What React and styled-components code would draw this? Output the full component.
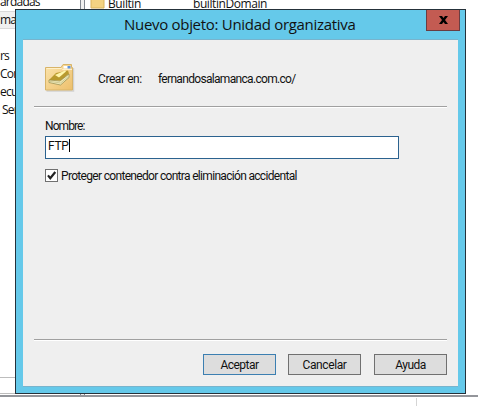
import React from 'react';
import styled, { createGlobalStyle } from 'styled-components';

const Global = createGlobalStyle`
  * { box-sizing: border-box; }
  html, body { margin: 0; background: #fff; overflow: hidden; }
  body { font-family: Roboto, "Noto Sans", sans-serif; font-size: 12px; color: #111; }
`;

const Console = styled.main`
  position: relative;
  width: 478px;
  height: 406px;
  display: flex;
  flex-direction: column;
  overflow: hidden;
  background: #fff;
`;
const Panes = styled.div`
  display: flex;
  height: 395px;
`;
const Tree = styled.div`
  width: 81px;
  border-right: 1px solid #828790;
  font: 12px/18px "Open Sans", sans-serif;
  letter-spacing: -0.8px;
  display: flex;
  flex-direction: column;
`;
const TreeItem = styled.div`
  height: 18px;
  flex: none;
  white-space: pre;
  padding-left: ${(p) => p.$indent || 0}px;
  margin-top: ${(p) => p.$gap || 0}px;
  background: ${(p) => (p.$selected ? '#f0f0f0' : 'transparent')};
  box-shadow: ${(p) => (p.$selected ? 'inset 0 1px #d9d9d9, inset 0 -1px #d9d9d9' : 'none')};
`;
const TreeScroll = styled.div`
  margin-top: auto;
  height: 17px;
  border-top: 1px solid #bdbdbd;
  border-bottom: 1px solid #bdbdbd;
  margin-bottom: 1px;
`;
const Splitter = styled.div`
  width: 3px;
  background: #f0f0f0;
`;
const List = styled.div`
  flex: 1;
  border-left: 1px solid #828790;
  padding-left: 5px;
  display: flex;
  align-items: flex-start;
  font: 12px/18px "Open Sans", sans-serif;
  letter-spacing: -0.42px;
`;
const ListIcon = styled.svg`
  margin-top: -7px;
  flex: none;
`;
const Cell = styled.span`
  width: ${(p) => p.$w}px;
  margin-top: -5px;
`;
const StatusBar = styled.div`
  height: 11px;
  display: flex;
  border-top: 2px solid #93959a;
`;
const StatusPart = styled.div`
  width: 417px;
  margin-top: 1px;
  border-right: 1px solid #d5d5d5;
`;

const Dialog = styled.section`
  position: absolute;
  left: 15px;
  top: 9px;
  width: 451px;
  height: 385px;
  border: 1px solid #25313a;
  background: #65c9ea;
  padding: 0 7px 6px;
  display: flex;
  flex-direction: column;
`;
const TitleBar = styled.header`
  height: 29px;
  flex: none;
  display: flex;
  justify-content: flex-end;
  margin-right: -2px;
`;
const Title = styled.h1`
  flex: 1;
  margin: 0 0 0 101px;
  font: 400 15px/29px "Open Sans", sans-serif;
  letter-spacing: ${(p) => p.$ls}px;
  white-space: nowrap;
`;
const Close = styled.button`
  width: 34px;
  height: 21px;
  padding: 0;
  border: 1px solid #693d42;
  border-top: 0;
  background: #c35b52;
  display: flex;
  align-items: center;
  justify-content: center;
`;
const Client = styled.div`
  flex: 1;
  background: #efefef;
  border-top: 1px solid #78b4cd;
  border-bottom: 1px solid #78b4cd;
  padding: 0 11px;
  display: flex;
  flex-direction: column;
`;
const Origin = styled.div`
  height: 66px;
  padding-left: 11px;
  display: flex;
  align-items: flex-start;
`;
const FolderIcon = styled.svg`
  flex: none;
  margin: 24px 23px 0 0;
`;
const Text = styled.span`
  font-size: 12px;
  line-height: 16px;
  letter-spacing: ${(p) => p.$ls || 0}px;
  white-space: nowrap;
`;
const OriginText = styled(Text)`
  width: ${(p) => p.$w}px;
  margin-top: 31px;
`;
const Rule = styled.div`
  height: 2px;
  flex: none;
  background: linear-gradient(#a0a0a0 50%, #fff 50%);
`;
const Form = styled.div`
  flex: 1;
  padding: 10px 0 0 11px;
  display: flex;
  flex-direction: column;
  align-items: flex-start;
`;
const Field = styled.div`
  width: 354px;
  height: 23px;
  margin: 2px 0 10px;
  padding: 1px 0 0 2px;
  border: 1px solid #2b628f;
  background: #fff;
  display: flex;
  align-items: flex-start;
`;
const Caret = styled.i`
  width: 1px;
  height: 13px;
  margin-top: 1px;
  background: #000;
`;
const CheckRow = styled.label`
  display: flex;
  align-items: center;
  gap: 3px;
  height: 13px;
`;
const Box = styled.svg`
  flex: none;
  border: 1px solid #707070;
  background: #fff;
`;
const Footer = styled.footer`
  height: 45px;
  padding-top: 13px;
  display: flex;
  justify-content: flex-end;
  gap: 12px;
`;
const Button = styled.button`
  width: 73px;
  height: 21px;
  padding: 1px 0 0;
  margin: 0 0 0 ${(p) => p.$ml || 0}px;
  border: 1px solid ${(p) => (p.$primary ? '#3c7fb1' : '#707070')};
  background: #ddd;
  color: #111;
  font: 12px/18px Roboto, sans-serif;
  letter-spacing: ${(p) => p.$ls || 0}px;
`;

export default function App() {
  return (
    <Console>
      <Global />
      <Panes>
        <Tree>
          <TreeItem $gap={-7}>ardadas</TreeItem>
          <TreeItem $selected>ma</TreeItem>
          <TreeItem $gap={18}>rs</TreeItem>
          <TreeItem>Com</TreeItem>
          <TreeItem>ecurity</TreeItem>
          <TreeItem $indent={2}>Service</TreeItem>
          <TreeScroll />
        </Tree>
        <Splitter />
        <List>
          <ListIcon width="18" height="16" viewBox="0 0 18 16">
            <path d="M1 2h13v13H1z" fill="#f3d382" stroke="#d9b45c" />
          </ListIcon>
          <Cell $w={85}>Builtin</Cell>
          <Cell $w={100}>builtinDomain</Cell>
        </List>
      </Panes>
      <StatusBar><StatusPart /></StatusBar>

      <Dialog>
        <TitleBar>
          <Title $ls={-0.3}>Nuevo objeto: Unidad organizativa</Title>
          <Close aria-label="Cerrar">
            <svg width="9" height="8" viewBox="0 0 9 8">
              <path d="M0 0h3l1.500 2L6 0h3L6 4l3 4H6L4.500 6 3 8H0l3-4z" fill="#000" />
            </svg>
          </Close>
        </TitleBar>
        <Client>
          <Origin>
            <FolderIcon width="30" height="28" viewBox="0 0 30 28">
              <defs>
                <linearGradient id="folder" x1="0" y1="0" x2="1" y2="1">
                  <stop offset="0" stopColor="#fbe4ac" />
                  <stop offset="1" stopColor="#edbf6b" />
                </linearGradient>
              </defs>
              <path d="M1.500 27h27V4" fill="none" stroke="#d2d2d2" strokeWidth="1.500" />
              <path d="M.5 3.500H16L18 .5h8.500v3h1v22.500H.5z" fill="url(#folder)" stroke="#d8b469" />
              <path d="M18.500 2h7v2.500h-7z" fill="#fff" />
              <path d="M22.500 2h3v2.500h-3z" fill="#5c92dd" />
              <path d="M1.500 4.500h15l1 1h9.500" fill="none" stroke="#fff0c8" />
              <path d="M4 16l7-7 12-2.500 1 3-8 7z" fill="#b99a2e" />
              <path d="M10 11l10-4.500 1 1-7 6z" fill="#fff6ac" />
              <path d="M4 16l11 1 9-7v3.500L15.500 21 4 18.500z" fill="#f1ebbb" stroke="#928a4a" strokeWidth=".7" />
              <path d="M4.500 17.300l11 1.700 8-6.500" fill="none" stroke="#c2ba80" strokeWidth=".7" />
            </FolderIcon>
            <OriginText $w={60} $ls={-0.42}>Crear en:</OriginText>
            <OriginText $w={150} $ls={-0.68}>fernandosalamanca.com.co/</OriginText>
          </Origin>
          <Rule />
          <Form>
            <Text $ls={-0.9}>Nombre:</Text>
            <Field><Text $ls={-0.3}>FTP</Text><Caret /></Field>
            <CheckRow>
              <Box width="13" height="13" viewBox="1 1 11 11">
                <path d="M3 6.300l2.300 3L10.300 3" fill="none" stroke="#222" strokeWidth="2.200" />
              </Box>
              <Text $ls={-0.68}>Proteger contenedor contra eliminación accidental</Text>
            </CheckRow>
          </Form>
          <Rule />
          <Footer>
            <Button $primary $ls={-0.5}>Aceptar</Button>
            <Button $ls={-0.4}>Cancelar</Button>
            <Button $ml={1} $ls={-0.5}>Ayuda</Button>
          </Footer>
        </Client>
      </Dialog>
    </Console>
  );
}
